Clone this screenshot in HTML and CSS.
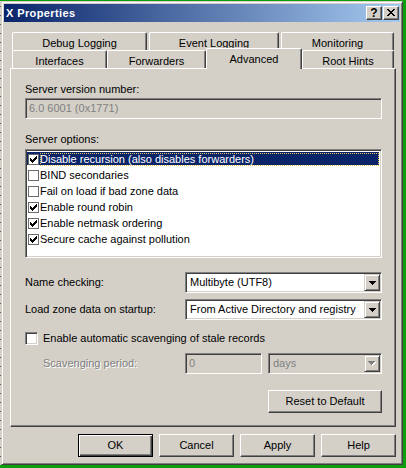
FILE: index.html
```html
<!DOCTYPE html>
<html>
<head>
<meta charset="utf-8">
<title>X Properties</title>
<link rel="stylesheet" href="styles.css">
</head>
<body>
<div class="screen">
  <div class="behind"></div>
  <div class="window">
    <div class="titlebar">
      <span class="title">X Properties</span>
      <div class="capbtns">
        <span class="capbtn qm">?</span>
        <span class="capbtn">
          <svg width="8" height="7" viewBox="0 0 8 7" shape-rendering="crispEdges"><path d="M0 0h2v1h-2zM6 0h2v1h-2zM1 1h2v1h-2zM5 1h2v1h-2zM2 2h4v1h-4zM3 3h2v1h-2zM2 4h4v1h-4zM1 5h2v1h-2zM5 5h2v1h-2zM0 6h2v1h-2zM6 6h2v1h-2z" fill="#000"/></svg>
        </span>
      </div>
    </div>
    <div class="client">
      <div class="tabrow back">
        <div class="tab t-debug">Debug Logging</div>
        <div class="tab t-event">Event Logging</div>
        <div class="tab t-mon">Monitoring</div>
      </div>
      <div class="tabrow front">
        <div class="tab t-if">Interfaces</div>
        <div class="tab t-fw">Forwarders</div>
        <div class="tab t-adv sel">Advanced</div>
        <div class="tab t-rh">Root Hints</div>
      </div>
      <div class="panel">
        <div class="lbl">Server version number:</div>
        <div class="edit ro ver">6.0 6001 (0x1771)</div>
        <div class="lbl opts">Server options:</div>
        <div class="listbox">
          <div class="item selected">
            <span class="lcheck"><svg width="7" height="7" viewBox="0 0 7 7" shape-rendering="crispEdges"><path d="M6 0h1v1h-1zM5 1h2v1h-2zM0 2h1v1h-1zM4 2h3v1h-3zM0 3h2v1h-2zM3 3h3v1h-3zM0 4h5v1h-5zM1 5h3v1h-3zM2 6h1v1h-1z" fill="#000"/></svg></span>
            <span class="itext">Disable recursion (also disables forwarders)</span>
          </div>
          <div class="item">
            <span class="lcheck"></span>
            <span class="itext">BIND secondaries</span>
          </div>
          <div class="item">
            <span class="lcheck"></span>
            <span class="itext">Fail on load if bad zone data</span>
          </div>
          <div class="item">
            <span class="lcheck"><svg width="7" height="7" viewBox="0 0 7 7" shape-rendering="crispEdges"><path d="M6 0h1v1h-1zM5 1h2v1h-2zM0 2h1v1h-1zM4 2h3v1h-3zM0 3h2v1h-2zM3 3h3v1h-3zM0 4h5v1h-5zM1 5h3v1h-3zM2 6h1v1h-1z" fill="#000"/></svg></span>
            <span class="itext">Enable round robin</span>
          </div>
          <div class="item">
            <span class="lcheck"><svg width="7" height="7" viewBox="0 0 7 7" shape-rendering="crispEdges"><path d="M6 0h1v1h-1zM5 1h2v1h-2zM0 2h1v1h-1zM4 2h3v1h-3zM0 3h2v1h-2zM3 3h3v1h-3zM0 4h5v1h-5zM1 5h3v1h-3zM2 6h1v1h-1z" fill="#000"/></svg></span>
            <span class="itext">Enable netmask ordering</span>
          </div>
          <div class="item">
            <span class="lcheck"><svg width="7" height="7" viewBox="0 0 7 7" shape-rendering="crispEdges"><path d="M6 0h1v1h-1zM5 1h2v1h-2zM0 2h1v1h-1zM4 2h3v1h-3zM0 3h2v1h-2zM3 3h3v1h-3zM0 4h5v1h-5zM1 5h3v1h-3zM2 6h1v1h-1z" fill="#000"/></svg></span>
            <span class="itext">Secure cache against pollution</span>
          </div>
        </div>
        <div class="frow r-name">
          <span class="flbl">Name checking:</span>
          <div class="combo wide">
            <span class="ctext">Multibyte (UTF8)</span>
            <span class="dropbtn"><svg width="7" height="4" viewBox="0 0 7 4" shape-rendering="crispEdges"><path d="M0 0h7v1h-7zM1 1h5v1h-5zM2 2h3v1h-3zM3 3h1v1h-1z" fill="#000"/></svg></span>
          </div>
        </div>
        <div class="frow r-load">
          <span class="flbl">Load zone data on startup:</span>
          <div class="combo wide">
            <span class="ctext">From Active Directory and registry</span>
            <span class="dropbtn"><svg width="7" height="4" viewBox="0 0 7 4" shape-rendering="crispEdges"><path d="M0 0h7v1h-7zM1 1h5v1h-5zM2 2h3v1h-3zM3 3h1v1h-1z" fill="#000"/></svg></span>
          </div>
        </div>
        <div class="chkrow">
          <span class="check3d"></span>
          <span class="chktext">Enable automatic scavenging of stale records</span>
        </div>
        <div class="frow r-scav">
          <span class="flbl disabled indent">Scavenging period:</span>
          <div class="edit ro num">0</div>
          <div class="combo days dis">
            <span class="ctext">days</span>
            <span class="dropbtn"><svg width="8" height="5" viewBox="0 0 8 5" shape-rendering="crispEdges"><path d="M1 1h7v1h-7zM2 2h5v1h-5zM3 3h3v1h-3zM4 4h1v1h-1z" fill="#fff"/><path d="M0 0h7v1h-7zM1 1h5v1h-5zM2 2h3v1h-3zM3 3h1v1h-1z" fill="#808080"/></svg></span>
          </div>
        </div>
        <div class="btn reset">Reset to Default</div>
      </div>
      <div class="btnrow">
        <div class="btn def">OK</div>
        <div class="btn">Cancel</div>
        <div class="btn">Apply</div>
        <div class="btn">Help</div>
      </div>
    </div>
  </div>
</div>
</body>
</html>
```

FILE: styles.css
```css
* { box-sizing: border-box; }
html, body { margin: 0; padding: 0; }
body {
  width: 406px;
  height: 468px;
  overflow: hidden;
  background: #0e9e0e;
  font-family: "Liberation Sans", Arial, sans-serif;
  font-size: 11px;
  color: #000;
}
.screen {
  display: flex;
  align-items: flex-start;
  padding-top: 1px;
  height: 468px;
}
.behind {
  width: 1px;
  height: 464px;
  background: repeating-linear-gradient(#d4d0c8 0 5px, #5a5a5a 5px 6px, #d4d0c8 6px 9px);
}
.window {
  width: 402px;
  height: 464px;
  background: #d4d0c8;
  border: 1px solid;
  border-color: #d4d0c8 #404040 #404040 #d4d0c8;
  box-shadow: inset 1px 1px #fff, inset -1px -1px #808080;
  padding: 2px;
  display: flex;
  flex-direction: column;
}
.titlebar {
  height: 18px;
  flex: none;
  background: linear-gradient(to right, #0a246a, #a6caf0);
  display: flex;
  align-items: center;
  justify-content: space-between;
  padding-left: 2px;
}
.title {
  color: #fff;
  font-weight: bold;
  font-size: 11px;
  letter-spacing: 0.4px;
  line-height: 14px;
}
.capbtns {
  display: flex;
  gap: 1px;
  margin-right: 1px;
}
.capbtn {
  width: 16px;
  height: 14px;
  background: #d4d0c8;
  border: 1px solid;
  border-color: #fff #404040 #404040 #fff;
  box-shadow: inset -1px -1px #808080;
  display: flex;
  align-items: center;
  justify-content: center;
  padding-bottom: 1px;
}
.qm {
  font-weight: bold;
  font-size: 12px;
  line-height: 12px;
  padding-bottom: 0;
}
.client {
  flex: 1;
  display: flex;
  flex-direction: column;
  padding: 10px 4px 0 6px;
}
.tabrow {
  display: flex;
  align-items: flex-end;
  height: 18px;
  margin-left: 2px;
}
.tab {
  height: 18px;
  border: 1px solid #fff;
  border-bottom: none;
  border-right-color: #404040;
  border-radius: 2px 2px 0 0;
  box-shadow: inset -1px 0 #808080;
  background: #d4d0c8;
  text-align: center;
  white-space: nowrap;
  padding-top: 2px;
  line-height: 16px;
  overflow: visible;
}
.t-debug { width: 135px; margin-right: 2px; }
.t-event { width: 130px; margin-right: 2px; }
.t-mon { width: 113px; }
.t-if { width: 95px; }
.t-fw { width: 99px; }
.t-adv { width: 96px; }
.t-rh { width: 92px; }
.tab.sel {
  height: 21px;
  margin-bottom: -1px;
  position: relative;
  z-index: 1;
}
.panel {
  width: 386px;
  height: 359px;
  flex: none;
  border: 1px solid;
  border-color: #fff #404040 #404040 #fff;
  box-shadow: inset -1px -1px #808080;
  padding: 14px 13px 0 14px;
  display: flex;
  flex-direction: column;
}
.lbl {
  line-height: 13px;
  height: 13px;
  white-space: nowrap;
}
.lbl.opts { margin-top: 14px; }
.edit {
  height: 21px;
  border: 1px solid;
  border-color: #808080 #fff #fff #808080;
  box-shadow: inset 1px 1px #404040, inset -1px -1px #d4d0c8;
  background: #fff;
  padding: 1px 3px;
  line-height: 17px;
  white-space: nowrap;
}
.edit.ro {
  background: #d4d0c8;
  color: #808080;
}
.ver { margin-top: 2px; }
.listbox {
  margin-top: 3px;
  height: 109px;
  background: #fff;
  border: 1px solid;
  border-color: #808080 #fff #fff #808080;
  box-shadow: inset 1px 1px #404040, inset -1px -1px #d4d0c8;
  padding: 1px 2px 1px 1px;
}
.item {
  height: 16px;
  display: flex;
  align-items: center;
  white-space: nowrap;
}
.item.selected {
  background: linear-gradient(#0a246a, #0a246a) 0 1px / 100% 13px no-repeat;
  color: #fff;
}
.lcheck {
  width: 11px;
  height: 11px;
  margin-left: 1px;
  border: 1px solid #6b6b6b;
  background: #fff;
  display: flex;
  align-items: center;
  justify-content: center;
  flex: none;
}
.itext {
  margin-left: 1px;
  line-height: 13px;
  padding-right: 2px;
  flex: 1;
}
.item.selected .itext {
  outline: 1px dotted #e8c850;
  outline-offset: -1px;
}
.frow {
  display: flex;
  align-items: center;
  height: 21px;
}
.r-name { margin-top: 14px; }
.r-load { margin-top: 6px; }
.r-scav { margin-top: 8px; }
.flbl {
  width: 160px;
  flex: none;
  white-space: nowrap;
  line-height: 13px;
}
.flbl.indent {
  padding-left: 18px;
}
.disabled {
  color: #808080;
  text-shadow: 1px 1px #fff;
}
.combo {
  height: 21px;
  border: 1px solid;
  border-color: #808080 #fff #fff #808080;
  box-shadow: inset 1px 1px #404040, inset -1px -1px #d4d0c8;
  background: #fff;
  display: flex;
  padding: 1px;
}
.combo.wide { width: 197px; }
.combo.days { width: 114px; margin-left: 6px; }
.combo.dis { background: #d4d0c8; color: #808080; }
.ctext {
  flex: 1;
  padding-left: 3px;
  line-height: 17px;
  white-space: nowrap;
  overflow: hidden;
}
.dropbtn {
  width: 16px;
  height: 17px;
  flex: none;
  background: #d4d0c8;
  border: 1px solid;
  border-color: #d4d0c8 #404040 #404040 #d4d0c8;
  box-shadow: inset 1px 1px #fff, inset -1px -1px #808080;
  display: flex;
  align-items: center;
  justify-content: center;
}
.edit.num { width: 77px; }
.chkrow {
  margin-top: 12px;
  height: 13px;
  display: flex;
  align-items: center;
}
.check3d {
  width: 13px;
  height: 13px;
  flex: none;
  background: #fff;
  border: 1px solid;
  border-color: #808080 #fff #fff #808080;
  box-shadow: inset 1px 1px #404040, inset -1px -1px #d4d0c8;
}
.chktext {
  margin-left: 5px;
  line-height: 13px;
  white-space: nowrap;
}
.btn {
  width: 75px;
  height: 23px;
  border: 1px solid;
  border-color: #fff #404040 #404040 #fff;
  box-shadow: inset -1px -1px #808080;
  background: #d4d0c8;
  display: flex;
  align-items: center;
  justify-content: center;
  white-space: nowrap;
  padding-bottom: 1px;
}
.btn.def {
  border: 1px solid #000;
  box-shadow: inset 1px 1px #fff, inset -1px -1px #404040, inset -2px -2px #808080;
}
.btn.reset {
  width: 114px;
  align-self: flex-end;
  margin-top: 16px;
}
.btnrow {
  display: flex;
  justify-content: flex-end;
  gap: 6px;
  margin-top: 7px;
}
```
